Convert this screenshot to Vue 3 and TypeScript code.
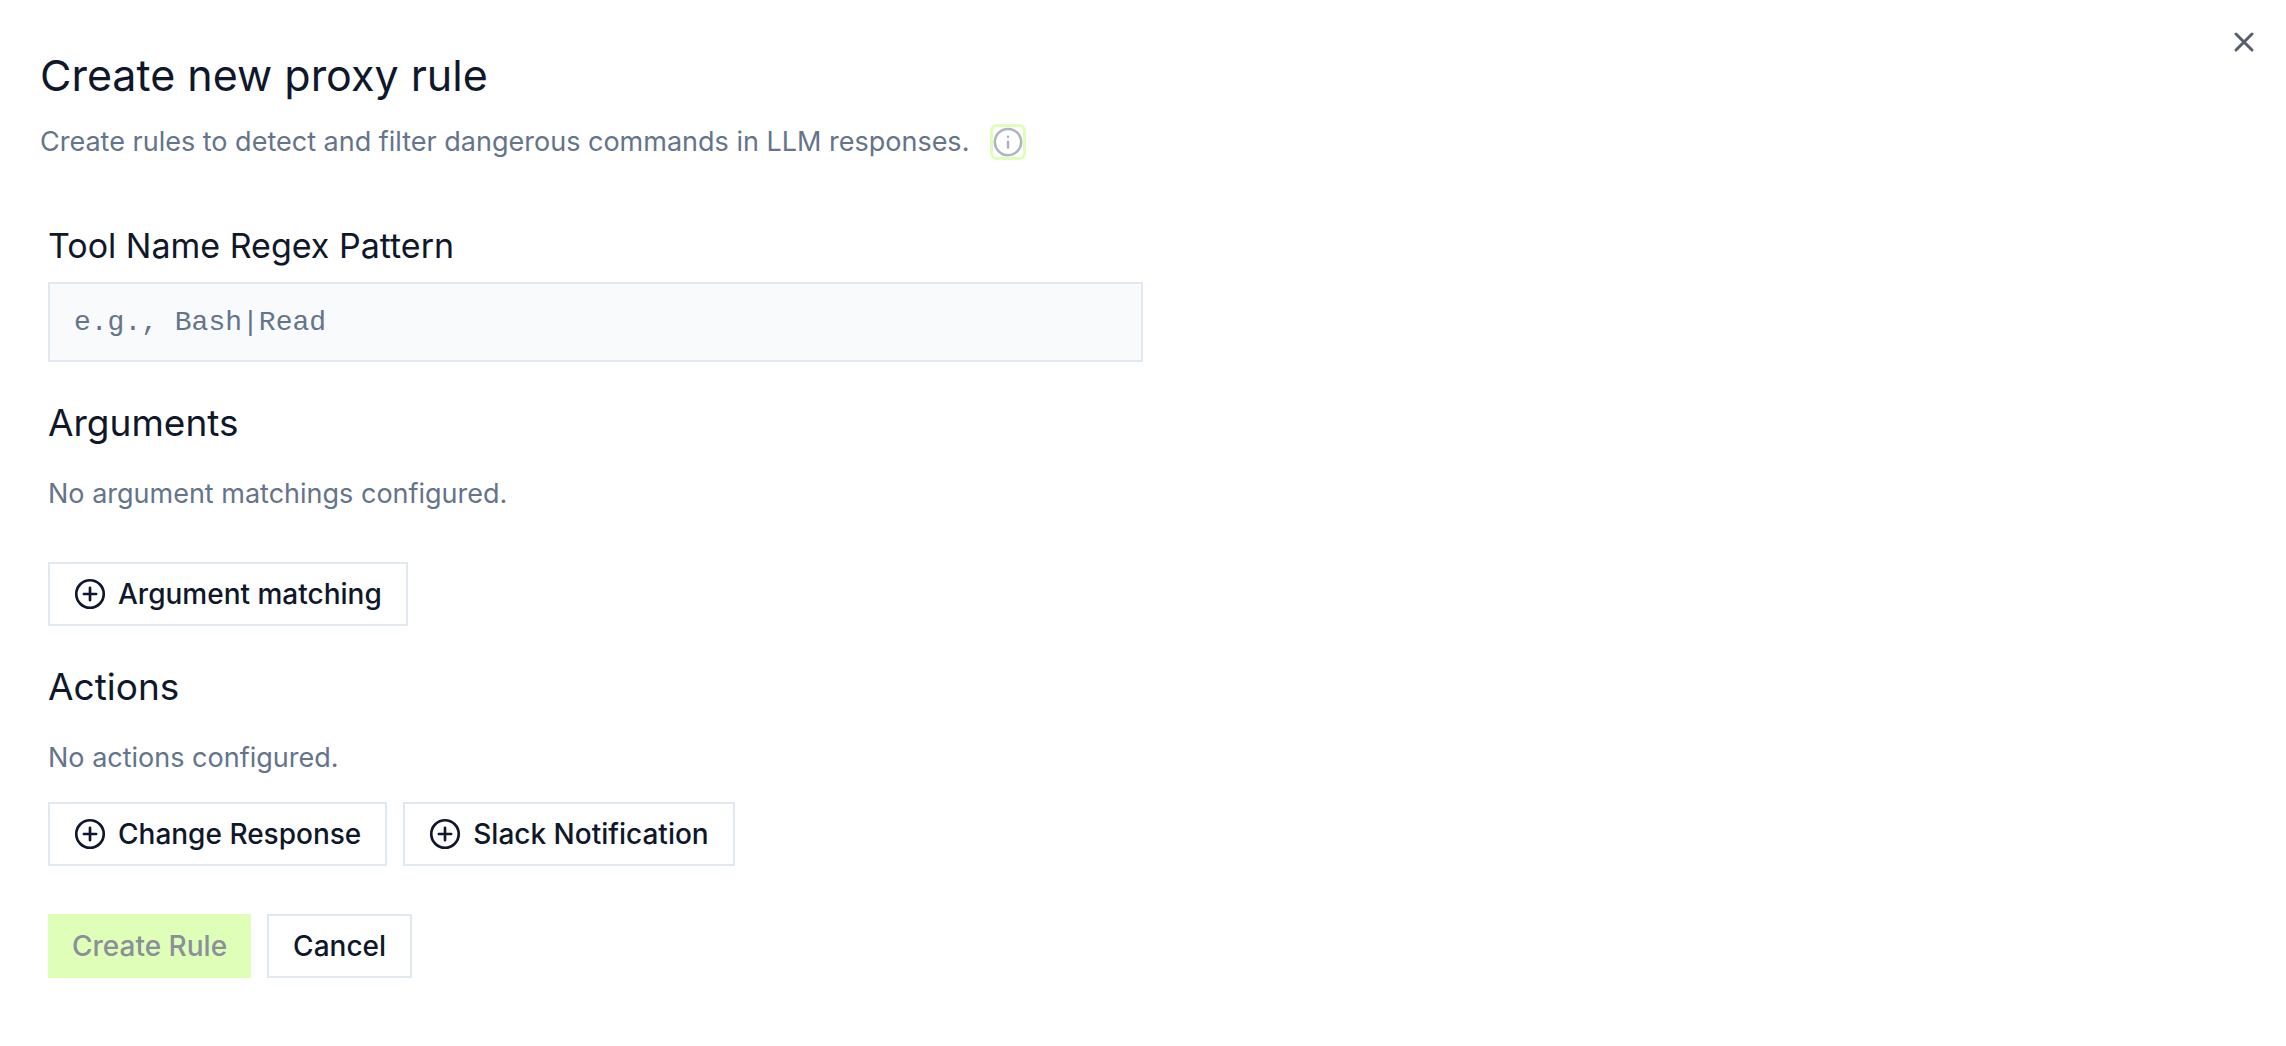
<script setup lang="ts">
import { ref } from 'vue'

const toolPattern = ref('')
const matchings = ref<string[]>([])
const actions = ref<string[]>([])
const actionKinds: string[] = ['Change Response', 'Slack Notification']
</script>

<template>
  <main class="dialog">
    <button class="close" type="button" aria-label="Close">
      <svg viewBox="0 0 32 32" width="32" height="32" aria-hidden="true">
        <path d="M8 8 24 24M24 8 8 24" />
      </svg>
    </button>

    <header class="head">
      <h1>Create new proxy rule</h1>
      <p class="lead">
        <span>Create rules to detect and filter dangerous commands in LLM responses.</span>
        <button class="info" type="button" aria-label="More information">
          <svg viewBox="0 0 24 24" width="30" height="30" aria-hidden="true">
            <circle cx="12" cy="12" r="10.5" />
            <path d="M12 11.8v4.6" />
            <path d="M12 7.8v.1" />
          </svg>
        </button>
      </p>
    </header>

    <form class="form" @submit.prevent>
      <label class="label" for="tool-pattern">Tool Name Regex Pattern</label>
      <input
        id="tool-pattern"
        v-model="toolPattern"
        class="field"
        type="text"
        placeholder="e.g., Bash|Read"
      />

      <section class="group">
        <h2>Arguments</h2>
        <p v-if="!matchings.length" class="empty">No argument matchings configured.</p>
        <div class="row spaced">
          <button class="btn" type="button">
            <svg class="plus" viewBox="0 0 24 24" width="32" height="32" aria-hidden="true">
              <circle cx="12" cy="12" r="10.3" />
              <path d="M12 7.4v9.2M7.4 12h9.2" />
            </svg>
            Argument matching
          </button>
        </div>
      </section>

      <section class="group">
        <h2>Actions</h2>
        <p v-if="!actions.length" class="empty">No actions configured.</p>
        <div class="row">
          <button v-for="kind in actionKinds" :key="kind" class="btn" type="button">
            <svg class="plus" viewBox="0 0 24 24" width="32" height="32" aria-hidden="true">
              <circle cx="12" cy="12" r="10.3" />
              <path d="M12 7.4v9.2M7.4 12h9.2" />
            </svg>
            {{ kind }}
          </button>
        </div>
      </section>

      <footer class="row spaced">
        <button class="btn primary" type="submit" disabled>Create Rule</button>
        <button class="btn" type="button">Cancel</button>
      </footer>
    </form>
  </main>
</template>

<style>
body {
  margin: 0;
  background: #fff;
}
</style>

<style scoped>
.dialog {
  position: relative;
  box-sizing: border-box;
  padding: 48px 40px;
  font-family: Inter, "Liberation Sans", sans-serif;
  font-size: 27px;
  line-height: 40px;
  color: #0f172a;
}

h1,
h2,
p {
  margin: 0;
  font-weight: 400;
}

h1 {
  font-size: 43px;
  line-height: 54px;
}

h2 {
  font-size: 37px;
  line-height: 46px;
}

button {
  font: inherit;
  color: inherit;
  cursor: pointer;
}

svg {
  display: block;
  flex: none;
  fill: none;
  stroke: currentColor;
  stroke-linecap: round;
  stroke-width: 2;
}

.close {
  position: absolute;
  top: 26px;
  right: 26px;
  padding: 0;
  border: 0;
  background: none;
  color: #565d6d;
}

.close svg {
  stroke-width: 3;
}

.lead {
  display: flex;
  align-items: center;
  gap: 24px;
  margin-top: 20px;
  color: #64748b;
}

.info {
  padding: 0;
  border: 0;
  border-radius: 4px;
  background: #fff;
  box-shadow: 0 0 0 3px #dfffb8;
  color: #abb4c2;
}

.form {
  padding: 60px 8px 0;
}

.label {
  display: block;
  font-size: 34px;
  line-height: 48px;
}

.field {
  box-sizing: border-box;
  display: block;
  width: 50%;
  height: 80px;
  margin-top: 12px;
  padding: 0 24px;
  border: 2px solid #e2e8f0;
  border-radius: 0;
  background: #f8fafc;
  color: #0f172a;
  font: 28px "Liberation Mono", monospace;
}

.field::placeholder {
  color: #64748b;
  opacity: 1;
}

.group {
  margin-top: 38px;
}

.empty {
  margin-top: 28px;
  color: #64748b;
}

.row {
  display: flex;
  gap: 16px;
  margin-top: 24px;
}

.spaced {
  margin-top: 48px;
}

.btn {
  box-sizing: border-box;
  display: flex;
  align-items: center;
  gap: 12px;
  height: 64px;
  padding: 0 24px;
  border: 2px solid #e2e8f0;
  background: #fff;
  font-size: 28px;
  font-weight: 500;
  white-space: nowrap;
}

.primary {
  border: 0;
  background: #dfffb8;
  color: #8a8f99;
  cursor: default;
}
</style>
